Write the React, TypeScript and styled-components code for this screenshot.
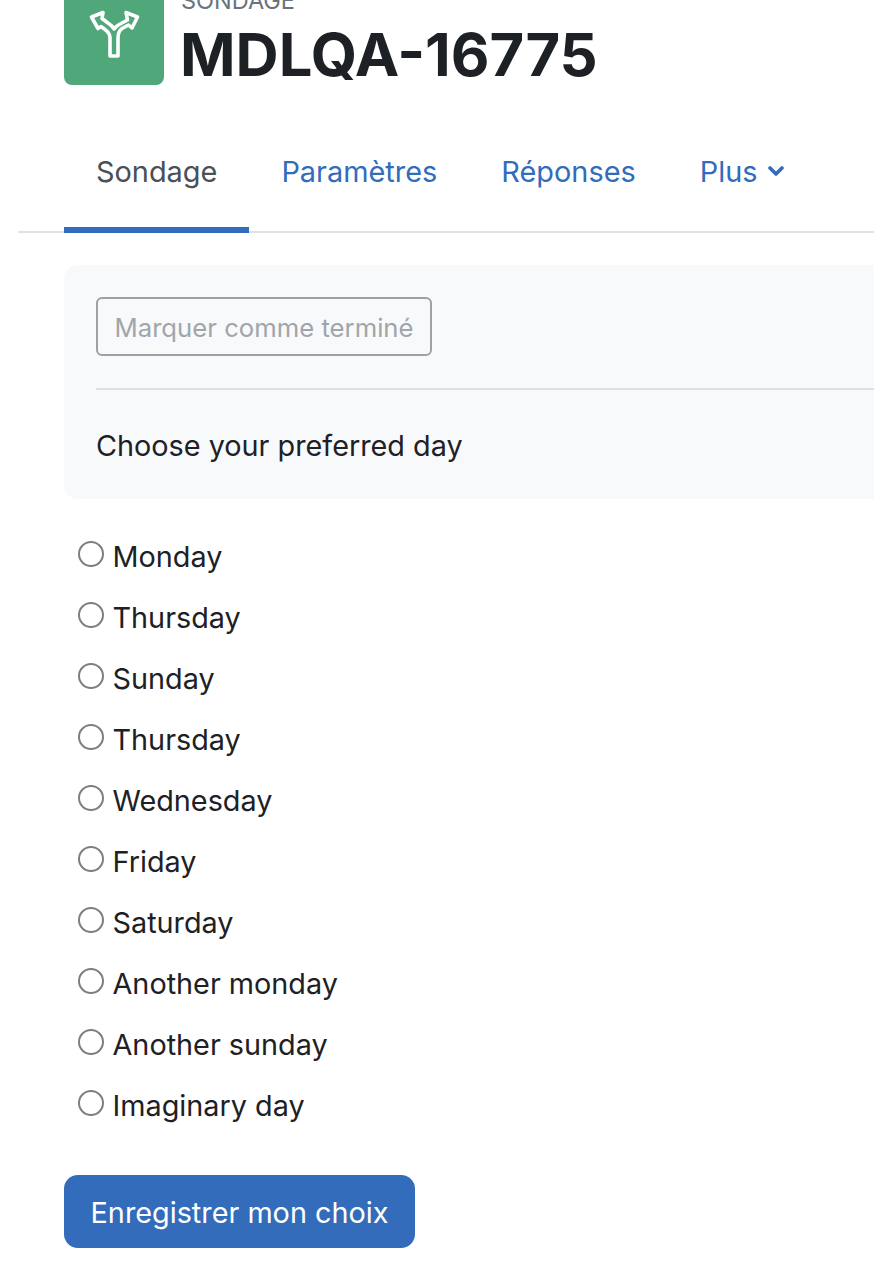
import React from "react";
import styled, { createGlobalStyle } from "styled-components";

const Global = createGlobalStyle`
  html, body { margin: 0; padding: 0; background: #fff; }
  body { font-family: Inter, "Liberation Sans", sans-serif; color: #1d2125; overflow: hidden; height: 1278px; }
`;

const Page = styled.div`
  width: 874px;
  height: 1278px;
  overflow: hidden;
  padding-left: 18px;
  box-sizing: border-box;
`;

const Header = styled.header`
  display: flex;
  gap: 17px;
  margin-left: 46px;
  height: 100px;
  margin-top: -15px;
`;

const IconTile = styled.div`
  width: 100px;
  height: 100px;
  border-radius: 8px;
  background: #4fa77a;
  display: flex;
  align-items: center;
  justify-content: center;
  color: #fff;
`;

const Titles = styled.div`
  display: flex;
  flex-direction: column;
`;

const Kicker = styled.div`
  font-size: 23.5px;
  line-height: 28px;
  color: #6a737b;
  margin-top: 2px;
`;

const Title = styled.h1`
  margin: 4px 0 0 -1px;
  font-size: 59.7px;
  line-height: 70px;
  font-weight: 700;
  color: #1d2125;
`;

const Tabs = styled.nav`
  display: flex;
  margin-top: 46px;
  height: 102px;
  border-bottom: 2px solid #dee2e6;
  padding-left: 46px;
  width: 856px;
  box-sizing: border-box;
`;

const Tab = styled.a<{ $active?: boolean }>`
  display: flex;
  align-items: center;
  gap: 10px;
  padding: 0 32px 16px;
  font-size: 28.9px;
  height: 102px;
  box-sizing: border-box;
  color: ${(p) => (p.$active ? "#495057" : "#326cbb")};
  border-bottom: 6px solid ${(p) => (p.$active ? "#326cbb" : "transparent")};
`;

const Card = styled.section`
  margin: 32px 0 0 46px;
  background: #f8f9fb;
  border-radius: 14px 0 0 14px;
  padding: 32px 0 32px 32px;
  height: 234px;
  box-sizing: border-box;
`;

const CompleteButton = styled.div`
  display: inline-block;
  border: 2px solid #9ca1a6;
  border-radius: 6px;
  padding: 0 16.5px;
  height: 59px;
  line-height: 57px;
  font-size: 25.7px;
  color: #a0a5aa;
  box-sizing: border-box;
  vertical-align: top;
`;

const Rule = styled.hr`
  border: 0;
  border-top: 2px solid #dee2e6;
  margin: 32px 0 0;
`;

const Question = styled.p`
  margin: 36px 0 0;
  font-size: 28.8px;
  line-height: 40px;
`;

const Options = styled.div`
  margin: 27px 0 0 60px;
  display: flex;
  flex-direction: column;
`;

const Option = styled.label`
  display: flex;
  align-items: center;
  gap: 8.5px;
  height: 61px;
  font-size: 28.8px;
`;

const Radio = styled.span`
  width: 26px;
  height: 26px;
  border-radius: 50%;
  border: 2px solid #7b7f83;
  box-sizing: border-box;
  background: #fff;
  margin-top: -5px;
  flex: none;
`;

const Submit = styled.button`
  display: block;
  margin: 39px 0 0 46px;
  width: 351px;
  height: 73px;
  border: 0;
  border-radius: 14px;
  padding: 2px 0 0;
  background: #326cbb;
  color: #fff;
  font: inherit;
  font-size: 28.8px;
`;

const days = ["Monday","Thursday","Sunday","Thursday","Wednesday","Friday","Saturday","Another monday","Another sunday","Imaginary day"];

export default function App() {
  return (
    <Page>
      <Global />
      <Header>
        <IconTile>
          <svg width="60" height="60" viewBox="0 1 60 60" fill="none" stroke="currentColor" strokeWidth="3.6" strokeLinejoin="round">
            <path d="M26 52V34C26 30 24 27.500 21 25.500L17 22.500L14 24.500L7.500 13L19 8.500L18 14.500L24 19C27 21 29 23 30 25C31.500 22.500 34 21 37 19.500L43.500 16L42 8.500L53.500 13L48 24L44.500 21L38 24.500C35 26.500 34 30 34 34V52Z" />
          </svg>
        </IconTile>
        <Titles>
          <Kicker>SONDAGE</Kicker>
          <Title>MDLQA-16775</Title>
        </Titles>
      </Header>
      <Tabs>
        <Tab $active>Sondage</Tab>
        <Tab>Paramètres</Tab>
        <Tab>Réponses</Tab>
        <Tab>Plus
          <svg width="16" height="12" viewBox="0 0 16 12" fill="none" stroke="currentColor" strokeWidth="3.6" strokeLinecap="round" strokeLinejoin="round"><path d="M2 3l6 6 6-6" /></svg>
        </Tab>
      </Tabs>
      <Card>
        <CompleteButton>Marquer comme terminé</CompleteButton>
        <Rule />
        <Question>Choose your preferred day</Question>
      </Card>
      <Options>
        {days.map((d, i) => (
          <Option key={i}><Radio />{d}</Option>
        ))}
      </Options>
      <Submit>Enregistrer mon choix</Submit>
    </Page>
  );
}
